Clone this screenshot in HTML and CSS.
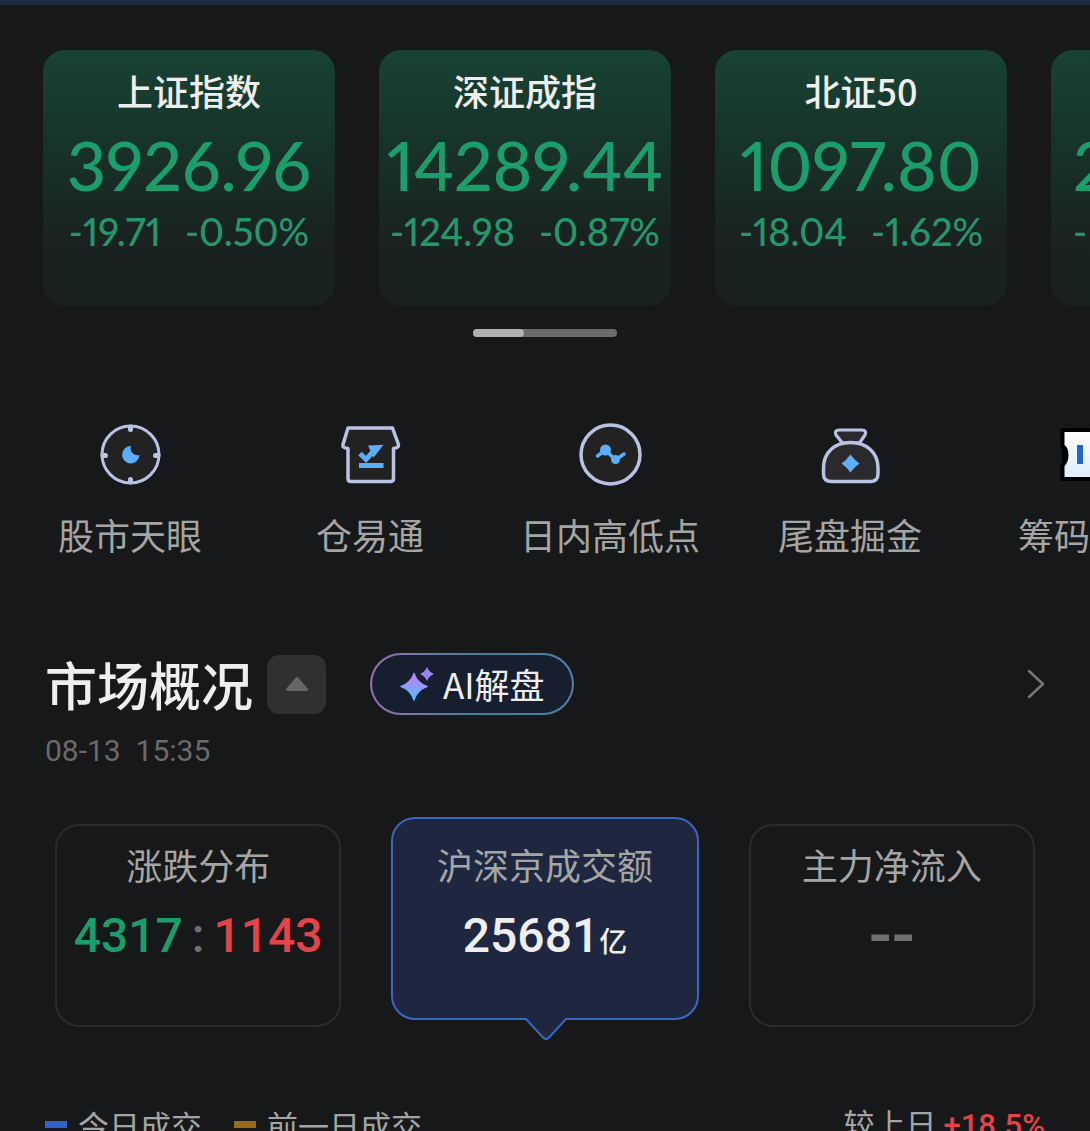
FILE: index.html
```html
<!DOCTYPE html>
<html lang="zh-CN">
<head>
    <meta charset="UTF-8">
    <meta name="viewport" content="width=device-width, initial-scale=1.0">
    <title>市场概况</title>
    <link rel="stylesheet" href="styles.css">
</head>
<body>

<div class="top-line"></div>

<!-- 指数卡片 -->
<section class="indices">
    <div class="index-card">
        <h3>上证指数</h3>
        <div class="price">3926.96</div>
        <div class="change"><span>-19.71</span><span>-0.50%</span></div>
    </div>
    <div class="index-card">
        <h3>深证成指</h3>
        <div class="price">14289.44</div>
        <div class="change"><span>-124.98</span><span>-0.87%</span></div>
    </div>
    <div class="index-card">
        <h3>北证50</h3>
        <div class="price">1097.80</div>
        <div class="change"><span>-18.04</span><span>-1.62%</span></div>
    </div>
    <div class="index-card next-card">
        <h3>&nbsp;</h3>
        <div class="price">2</div>
        <div class="change"><span>-</span></div>
    </div>
</section>
<div class="pager"><div class="pager-thumb"></div></div>

<!-- 快捷入口 -->
<nav class="tools">
    <a class="tool" href="#">
        <svg viewBox="0 0 64 64">
            <circle cx="32.500" cy="31.500" r="28.500" fill="#222" stroke="#b9c2e2" stroke-width="3"/>
            <path d="M32.500 4v2.500M32.500 56.500v2.500M5 32.500h2.500M57.500 32.500h2.500" stroke="#b9c2e2" stroke-width="5" stroke-linecap="round"/>
            <path d="M33 23A8.700 8.700 0 1 0 41.500 32A7 7 0 0 1 33 23Z" fill="#5aaefc"/>
        </svg>
        <span>股市天眼</span>
    </a>
    <a class="tool" href="#">
        <svg viewBox="0 0 64 64">
            <path d="M10 5h44.500l6 16.500q.5 3.500-5 4v30q0 3-3 3H13q-3 0-3-3v-30q-6-.5-5-4z" fill="#222" stroke="#b9c2e2" stroke-width="3.500" stroke-linejoin="round"/>
            <path d="M22 30.500l6 6L38 25.500" fill="none" stroke="#5aaefc" stroke-width="5"/>
            <path d="M30 22.500l15.500-.8-10 13z" fill="#5aaefc"/>
            <path d="M21 42.500h24.500" stroke="#5aaefc" stroke-width="5"/>
        </svg>
        <span>仓易通</span>
    </a>
    <a class="tool" href="#">
        <svg viewBox="0 0 64 64">
            <circle cx="32.500" cy="31.500" r="29.500" fill="#222" stroke="#b9c2e2" stroke-width="3.500"/>
            <path d="M19.500 33l8-6 10 10 8.500-6" fill="none" stroke="#5aaefc" stroke-width="3.500" stroke-linecap="round" stroke-linejoin="round"/>
            <circle cx="27.500" cy="27" r="5.500" fill="#5aaefc"/>
            <circle cx="37.500" cy="36.500" r="4.500" fill="#5aaefc"/>
        </svg>
        <span>日内高低点</span>
    </a>
    <a class="tool" href="#">
        <svg viewBox="0 0 64 64">
            <path d="M24.500 20l-6.500-8q-2-5 3-5h23q5 0 3 5l-5.500 8z" fill="#2a2a2c" stroke="#b9c2e2" stroke-width="3.200" stroke-linejoin="round"/>
            <path d="M5.500 45C5.500 29 17 19.500 32.500 19.500S60 29 60 45v6q0 7.500-8 7.500h-38.500q-8 0-8-7.500z" fill="#2a2a2c" stroke="#b9c2e2" stroke-width="3.500"/>
            <path d="M32.500 31.500q4 5.500 9 9-5 3.500-9 9-4-5.500-9-9 5-3.500 9-9z" fill="#5aaefc"/>
        </svg>
        <span>尾盘掘金</span>
    </a>
    <a class="tool" href="#">
        <svg viewBox="0 0 64 64">
            <defs>
                <linearGradient id="ticket" x1="0" y1="0" x2="0" y2="1">
                    <stop offset="0" stop-color="#fff"/>
                    <stop offset="1" stop-color="#dcecfd"/>
                </linearGradient>
            </defs>
            <path d="M4.500 7h55v15q-6 2-6 10t6 10v14h-55V42q4-3 4-10t-4-9z" fill="url(#ticket)" stroke="#000" stroke-width="4" stroke-linejoin="round"/>
            <path d="M4 24a8 8 0 0 1 0 15z" fill="#000"/>
            <path d="M22 22v19M36 18v23M48 26v15" stroke="#2563d2" stroke-width="6"/>
        </svg>
        <span>筹码分布</span>
    </a>
</nav>

<!-- 市场概况 -->
<section class="market">
    <header class="market-head">
        <h2>市场概况</h2>
        <button class="fold-btn" type="button" aria-label="收起">
            <svg viewBox="0 0 24 16"><path d="M12 2.500L21.500 13.500h-19z" fill="#666" stroke="#666" stroke-width="3" stroke-linejoin="round"/></svg>
        </button>
        <button class="ai-btn" type="button">
            <svg viewBox="0 0 36 36">
                <defs>
                    <linearGradient id="star" x1="0.500" y1="0" x2="0.400" y2="1">
                        <stop offset="0.200" stop-color="#b584f5"/>
                        <stop offset="1" stop-color="#4cc3fb"/>
                    </linearGradient>
                </defs>
                <path d="M15 7q3.500 10 13.500 13.500Q18.500 24 15 34.500 11.500 24 1.500 20.500 11.500 17 15 7z" fill="url(#star)" stroke="url(#star)" stroke-linejoin="round"/>
                <path d="M28 1q2 5 7 7-5 2-7 7-2-5-7-7 5-2 7-7z" fill="#9a86f0"/>
            </svg>
            AI解盘
        </button>
        <a class="more" href="#" aria-label="更多">
            <svg viewBox="0 0 18 32"><path d="M2 3l14 13L2 29" fill="none" stroke="#77777a" stroke-width="2.500" stroke-linecap="round" stroke-linejoin="round"/></svg>
        </a>
    </header>
    <time class="updated">08-13&nbsp; 15:35</time>

    <div class="stats">
        <button class="stat" type="button">
            <span class="stat-name">涨跌分布</span>
            <span class="stat-value"><span class="down">4317</span><span class="colon">:</span><span class="up">1143</span></span>
        </button>
        <button class="stat active" type="button">
            <span class="stat-name">沪深京成交额</span>
            <span class="stat-value">25681<small>亿</small></span>
            <svg class="pointer" viewBox="0 0 42 23">
                <path d="M0 0V2H1L18 20Q21 23 24 20L41 2H42V0Z" fill="#1e273f"/>
                <path d="M0 1H1L18 19.500Q21 22.500 24 19.500L41 1H42" fill="none" stroke="#3c66c0" stroke-width="2"/>
            </svg>
        </button>
        <button class="stat" type="button">
            <span class="stat-name">主力净流入</span>
            <span class="stat-value none">--</span>
        </button>
    </div>

    <div class="legend">
        <span class="legend-item"><i class="mark today"></i>今日成交</span>
        <span class="legend-item"><i class="mark prev"></i>前一日成交</span>
        <span class="compare">较上日 <b>+18.5%</b></span>
    </div>
</section>

</body>
</html>
```

FILE: styles.css
```css
* {
    margin: 0;
    padding: 0;
    box-sizing: border-box;
}

body {
    height: 100vh;
    overflow: hidden;
    background: #17181a;
    color: #eee;
    font-family: "Noto Sans CJK SC", sans-serif;
}

button {
    font-family: inherit;
    color: inherit;
    background: none;
    border: none;
    cursor: pointer;
}

a {
    color: inherit;
    text-decoration: none;
}

svg {
    display: block;
}

.top-line {
    height: 5px;
    background: #1d2842;
}

/* 指数卡片 */
.indices {
    display: flex;
    gap: 44px;
    margin-top: 45px;
    padding-left: 43px;
    overflow: hidden;
}

.index-card {
    flex: 0 0 292px;
    min-height: 256px;
    padding-top: 20px;
    border-radius: 22px;
    background: linear-gradient(#184334, #17352b 32%, #192320 72%, #192020);
    text-align: center;
}

.index-card h3 {
    font-size: 36px;
    font-weight: 500;
    line-height: 40px;
}

.price {
    display: flex;
    justify-content: center;
    margin-top: 20px;
    font: 500 68px/70px Lato, sans-serif;
    font-variant-numeric: proportional-nums;
    color: #1b9d6c;
}

.change {
    display: flex;
    justify-content: center;
    gap: 24px;
    margin-top: 11px;
    font: 500 38px/40px Lato, sans-serif;
    font-variant-numeric: proportional-nums;
    color: #26966d;
}

.next-card .price,
.next-card .change {
    justify-content: flex-start;
    padding-left: 22px;
}

/* 滚动条 */
.pager {
    width: 144px;
    height: 8px;
    margin: 23px auto 0;
    border-radius: 4px;
    background: #6b6b6b;
}

.pager-thumb {
    width: 51px;
    height: 8px;
    border-radius: 4px;
    background: #b0b0b0;
}

/* 快捷入口 */
.tools {
    display: flex;
    margin-top: 86px;
    padding-left: 10px;
    overflow: hidden;
}

.tool {
    display: flex;
    flex: 0 0 240px;
    flex-direction: column;
    align-items: center;
    gap: 19px;
    font-size: 36px;
    line-height: 56px;
    color: #a5a5a5;
    white-space: nowrap;
}

.tool svg {
    width: 64px;
    height: 64px;
}

/* 市场概况 */
.market {
    margin-top: 91px;
    padding: 0 45px;
}

.market-head {
    display: flex;
    align-items: center;
    height: 62px;
}

.market-head h2 {
    font-size: 52px;
    font-weight: 500;
    line-height: 56px;
}

.fold-btn {
    display: grid;
    place-items: center;
    width: 59px;
    height: 59px;
    margin-left: 14px;
    border-radius: 12px;
    background: #303030;
}

.fold-btn svg {
    width: 24px;
    height: 16px;
}

.ai-btn {
    display: flex;
    align-items: center;
    gap: 8px;
    height: 62px;
    margin-left: 44px;
    padding: 0 27px;
    border: 2px solid transparent;
    border-radius: 31px;
    background: linear-gradient(#171e2f, #171e2f) padding-box, linear-gradient(90deg, #9a70b0, #3f7f95 60%, #5580a8) border-box;
    font-size: 35px;
    line-height: 44px;
}

.ai-btn svg {
    width: 36px;
    height: 36px;
}

.more {
    margin-left: auto;
}

.more svg {
    width: 18px;
    height: 32px;
}

.updated {
    display: block;
    margin-top: 16px;
    font: 30px/40px Roboto, sans-serif;
    color: #6a6a6c;
}

/* 三个统计框 */
.stats {
    display: grid;
    grid-template-columns: 287fr 308fr 287fr;
    gap: 50px;
    align-items: start;
    margin-top: 46px;
    padding: 0 10px;
}

.stat {
    display: flex;
    flex-direction: column;
    align-items: center;
    height: 203px;
    margin-top: 7px;
    padding-top: 16px;
    border: 2px solid #2a2b2d;
    border-radius: 24px;
}

.stat.active {
    position: relative;
    margin-top: 0;
    padding-top: 23px;
    border-color: #3c66c0;
    background: #1e273f;
}

.stat-name {
    font-size: 36px;
    line-height: 44px;
    color: #a5a5a5;
}

.stat-value {
    display: flex;
    align-items: baseline;
    margin-top: 20px;
    font: 500 48px/60px Roboto, sans-serif;
}

.stat-value small {
    font: 500 28px/40px "Noto Sans CJK SC", sans-serif;
}

.stat-value.none {
    font-size: 68px;
}

.down {
    color: #1b9d6c;
}

.up {
    color: #e4434a;
}

.colon,
.none {
    color: #707072;
}

.colon {
    padding: 0 9px;
}

.pointer {
    position: absolute;
    top: 199px;
    left: 50%;
    width: 42px;
    height: 23px;
    margin-left: -20px;
}

/* 图例 */
.legend {
    display: flex;
    align-items: center;
    gap: 32px;
    margin-top: 74px;
    font-size: 31px;
    line-height: 44px;
    color: #a5a5a5;
}

.legend-item {
    display: flex;
    align-items: center;
    gap: 11px;
}

.mark {
    width: 22px;
    height: 7px;
}

.today {
    background: #3462cc;
}

.prev {
    background: #9a6c17;
}

.compare {
    margin-left: auto;
}

.compare b {
    font: 500 31px/44px Roboto, sans-serif;
    color: #e4434a;
}
```
